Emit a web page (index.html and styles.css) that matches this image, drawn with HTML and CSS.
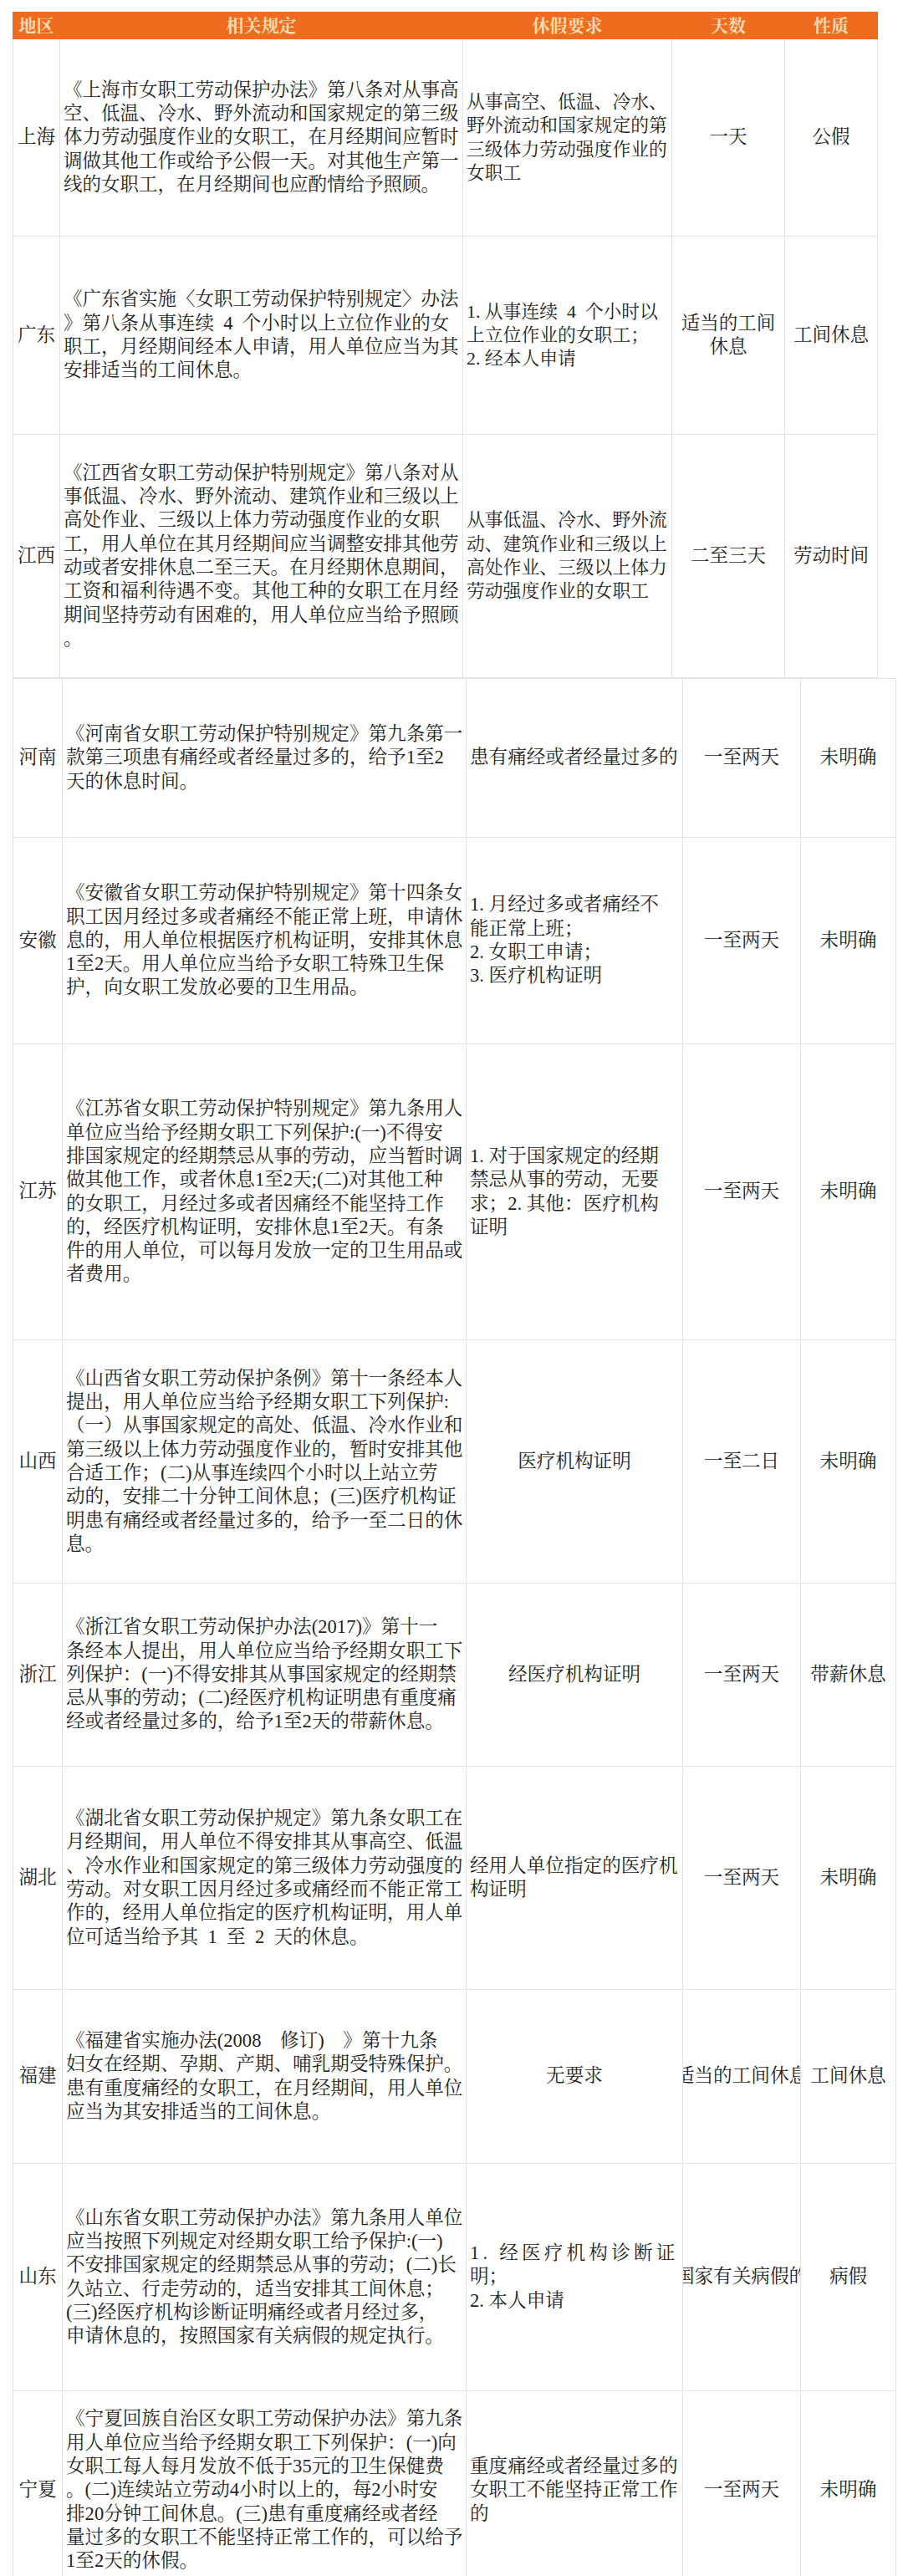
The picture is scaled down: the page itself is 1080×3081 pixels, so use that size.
FILE: index.html
```html
<!DOCTYPE html>
<html lang="zh-CN">
<head>
<meta charset="utf-8">
<title>各地经期休假规定</title>
<link rel="stylesheet" href="styles.css">
</head>
<body>
<div class="page">
  <table class="sheet sheet-top">
    <colgroup>
      <col class="c-region"><col class="c-rule"><col class="c-req"><col class="c-days"><col class="c-type">
    </colgroup>
    <thead>
      <tr class="head">
        <th>地区</th><th>相关规定</th><th>休假要求</th><th>天数</th><th>性质</th>
      </tr>
    </thead>
    <tbody>
      <tr class="r-shanghai">
        <td class="region">上海</td>
        <td class="rule">《上海市女职工劳动保护办法》第八条对从事高<br>空、低温、冷水、野外流动和国家规定的第三级<br>体力劳动强度作业的女职工，在月经期间应暂时<br>调做其他工作或给予公假一天。对其他生产第一<br>线的女职工，在月经期间也应酌情给予照顾。</td>
        <td class="req">从事高空、低温、冷水、<br>野外流动和国家规定的第<br>三级体力劳动强度作业的<br>女职工</td>
        <td class="mid">一天</td>
        <td class="mid">公假</td>
      </tr>
      <tr class="r-guangdong">
        <td class="region">广东</td>
        <td class="rule">《广东省实施〈女职工劳动保护特别规定〉办法<br>》第八条从事连续&ensp;4&ensp;个小时以上立位作业的女<br>职工，月经期间经本人申请，用人单位应当为其<br>安排适当的工间休息。</td>
        <td class="req">1. 从事连续&ensp;4&ensp;个小时以<br>上立位作业的女职工；<br>2. 经本人申请</td>
        <td class="mid">适当的工间<br>休息</td>
        <td class="mid">工间休息</td>
      </tr>
      <tr class="r-jiangxi">
        <td class="region">江西</td>
        <td class="rule">《江西省女职工劳动保护特别规定》第八条对从<br>事低温、冷水、野外流动、建筑作业和三级以上<br>高处作业、三级以上体力劳动强度作业的女职<br>工，用人单位在其月经期间应当调整安排其他劳<br>动或者安排休息二至三天。在月经期休息期间，<br>工资和福利待遇不变。其他工种的女职工在月经<br>期间坚持劳动有困难的，用人单位应当给予照顾<br>。</td>
        <td class="req">从事低温、冷水、野外流<br>动、建筑作业和三级以上<br>高处作业、三级以上体力<br>劳动强度作业的女职工</td>
        <td class="mid">二至三天</td>
        <td class="mid">劳动时间</td>
      </tr>
    </tbody>
  </table>

  <table class="sheet sheet-bottom">
    <colgroup>
      <col class="c-region"><col class="c-rule"><col class="c-req"><col class="c-days"><col class="c-type">
    </colgroup>
    <tbody>
      <tr class="r-henan">
        <td class="region">河南</td>
        <td class="rule">《河南省女职工劳动保护特别规定》第九条第一<br>款第三项患有痛经或者经量过多的，给予1至2<br>天的休息时间。</td>
        <td class="req">患有痛经或者经量过多的</td>
        <td class="mid">一至两天</td>
        <td class="mid">未明确</td>
      </tr>
      <tr class="r-anhui">
        <td class="region">安徽</td>
        <td class="rule">《安徽省女职工劳动保护特别规定》第十四条女<br>职工因月经过多或者痛经不能正常上班，申请休<br>息的，用人单位根据医疗机构证明，安排其休息<br>1至2天。用人单位应当给予女职工特殊卫生保<br>护，向女职工发放必要的卫生用品。</td>
        <td class="req">1. 月经过多或者痛经不<br>能正常上班；<br>2. 女职工申请；<br>3. 医疗机构证明</td>
        <td class="mid">一至两天</td>
        <td class="mid">未明确</td>
      </tr>
      <tr class="r-jiangsu">
        <td class="region">江苏</td>
        <td class="rule">《江苏省女职工劳动保护特别规定》第九条用人<br>单位应当给予经期女职工下列保护:(一)不得安<br>排国家规定的经期禁忌从事的劳动，应当暂时调<br>做其他工作，或者休息1至2天;(二)对其他工种<br>的女职工，月经过多或者因痛经不能坚持工作<br>的，经医疗机构证明，安排休息1至2天。有条<br>件的用人单位，可以每月发放一定的卫生用品或<br>者费用。</td>
        <td class="req">1. 对于国家规定的经期<br>禁忌从事的劳动，无要<br>求；2. 其他：医疗机构<br>证明</td>
        <td class="mid">一至两天</td>
        <td class="mid">未明确</td>
      </tr>
      <tr class="r-shanxi">
        <td class="region">山西</td>
        <td class="rule">《山西省女职工劳动保护条例》第十一条经本人<br>提出，用人单位应当给予经期女职工下列保护:<br>（一）从事国家规定的高处、低温、冷水作业和<br>第三级以上体力劳动强度作业的，暂时安排其他<br>合适工作；(二)从事连续四个小时以上站立劳<br>动的，安排二十分钟工间休息；(三)医疗机构证<br>明患有痛经或者经量过多的，给予一至二日的休<br>息。</td>
        <td class="mid">医疗机构证明</td>
        <td class="mid">一至二日</td>
        <td class="mid">未明确</td>
      </tr>
      <tr class="r-zhejiang">
        <td class="region">浙江</td>
        <td class="rule">《浙江省女职工劳动保护办法(2017)》第十一<br>条经本人提出，用人单位应当给予经期女职工下<br>列保护：(一)不得安排其从事国家规定的经期禁<br>忌从事的劳动；(二)经医疗机构证明患有重度痛<br>经或者经量过多的，给予1至2天的带薪休息。</td>
        <td class="mid">经医疗机构证明</td>
        <td class="mid">一至两天</td>
        <td class="mid">带薪休息</td>
      </tr>
      <tr class="r-hubei">
        <td class="region">湖北</td>
        <td class="rule">《湖北省女职工劳动保护规定》第九条女职工在<br>月经期间，用人单位不得安排其从事高空、低温<br>、冷水作业和国家规定的第三级体力劳动强度的<br>劳动。对女职工因月经过多或痛经而不能正常工<br>作的，经用人单位指定的医疗机构证明，用人单<br>位可适当给予其&ensp;1&ensp;至&ensp;2&ensp;天的休息。</td>
        <td class="req">经用人单位指定的医疗机<br>构证明</td>
        <td class="mid">一至两天</td>
        <td class="mid">未明确</td>
      </tr>
      <tr class="r-fujian">
        <td class="region">福建</td>
        <td class="rule">《福建省实施办法(2008&emsp;修订)&emsp;》第十九条<br>妇女在经期、孕期、产期、哺乳期受特殊保护。<br>患有重度痛经的女职工，在月经期间，用人单位<br>应当为其安排适当的工间休息。</td>
        <td class="mid">无要求</td>
        <td class="clip"><div class="clip-inner">适当的工间休息</div></td>
        <td class="mid">工间休息</td>
      </tr>
      <tr class="r-shandong">
        <td class="region">山东</td>
        <td class="rule">《山东省女职工劳动保护办法》第九条用人单位<br>应当按照下列规定对经期女职工给予保护:(一)<br>不安排国家规定的经期禁忌从事的劳动；(二)长<br>久站立、行走劳动的，适当安排其工间休息；<br>(三)经医疗机构诊断证明痛经或者月经过多，<br>申请休息的，按照国家有关病假的规定执行。</td>
        <td class="req"><span class="spread">1. 经医疗机构诊断证</span><br>明；<br>2. 本人申请</td>
        <td class="clip"><div class="clip-inner">国家有关病假的</div></td>
        <td class="mid">病假</td>
      </tr>
      <tr class="r-ningxia">
        <td class="region">宁夏</td>
        <td class="rule">《宁夏回族自治区女职工劳动保护办法》第九条<br>用人单位应当给予经期女职工下列保护：(一)向<br>女职工每人每月发放不低于35元的卫生保健费<br>。(二)连续站立劳动4小时以上的，每2小时安<br>排20分钟工间休息。(三)患有重度痛经或者经<br>量过多的女职工不能坚持正常工作的，可以给予<br>1至2天的休假。</td>
        <td class="req">重度痛经或者经量过多的<br>女职工不能坚持正常工作<br>的</td>
        <td class="mid">一至两天</td>
        <td class="mid">未明确</td>
      </tr>
    </tbody>
  </table>
</div>
</body>
</html>
```
FILE: styles.css
```css
* {
  box-sizing: border-box;
}

body {
  margin: 0;
  background: #ffffff;
  color: #1f1f1f;
  font-family: "Liberation Serif", "Noto Serif CJK SC", "Noto Sans CJK SC", serif;
}

.page {
  padding: 14px 0 0 15px;
}

.sheet {
  border-collapse: collapse;
  table-layout: fixed;
}

.sheet-top {
  width: 1034px;
  font-size: 22.5px;
}

.sheet-bottom {
  width: 1056px;
  font-size: 22.6px;
}

.sheet-top .c-region { width: 56px; }
.sheet-top .c-rule { width: 482px; }
.sheet-top .c-req { width: 250px; }
.sheet-top .c-days { width: 135px; }
.sheet-top .c-type { width: 111px; }

.sheet-bottom .c-region { width: 59px; }
.sheet-bottom .c-rule { width: 483px; }
.sheet-bottom .c-req { width: 259px; }
.sheet-bottom .c-days { width: 141px; }
.sheet-bottom .c-type { width: 114px; }

.head {
  height: 32px;
}

.head th {
  background: #ef6c1e;
  border: 1px solid #ef6c1e;
  color: #fbdcb4;
  font-size: 21px;
  font-weight: bold;
  line-height: 30px;
  padding: 0;
  text-align: center;
  white-space: nowrap;
}

.sheet td {
  border: 1px solid #e3e3e3;
  vertical-align: middle;
  padding: 0 3px 0 4px;
  line-height: 28.3px;
  white-space: nowrap;
}

.sheet td.region,
.sheet td.mid {
  text-align: center;
  padding: 0;
}

.sheet td.rule,
.sheet td.req {
  text-align: left;
}

.sheet-top td.req {
  font-size: 21.8px;
  padding: 0 2px 0 4px;
}

.sheet td.clip {
  padding: 0;
  overflow: hidden;
}

.clip-inner {
  display: flex;
  justify-content: center;
  white-space: nowrap;
}

.spread {
  letter-spacing: 4.2px;
}

.r-shanghai { height: 236px; }
.r-guangdong { height: 237px; }
.r-jiangxi { height: 291px; }

.r-henan { height: 190px; }
.r-anhui { height: 247px; }
.r-jiangsu { height: 354px; }
.r-shanxi { height: 291px; }
.r-zhejiang { height: 219px; }
.r-hubei { height: 267px; }
.r-fujian { height: 208px; }
.r-shandong { height: 272px; }
.r-ningxia { height: 238px; }
```
